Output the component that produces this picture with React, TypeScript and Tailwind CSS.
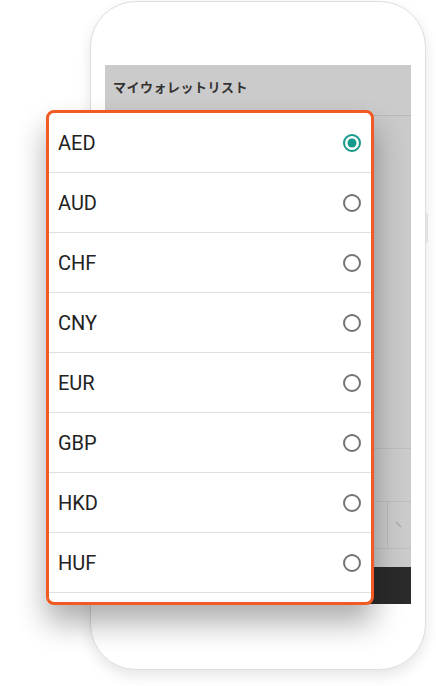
const currencies = ["AED", "AUD", "CHF", "CNY", "EUR", "GBP", "HKD", "HUF"];

function Radio({ checked }: { checked: boolean }) {
  return (
    <svg width="20" height="20" viewBox="0 0 20 20">
      <circle
        cx="10"
        cy="10"
        r="8"
        fill="none"
        stroke={checked ? "#14998a" : "#737373"}
        strokeWidth="2"
      />
      {checked && <circle cx="10" cy="10" r="4.5" fill="#14998a" />}
    </svg>
  );
}

export default function App() {
  return (
    <div className="relative h-[686px] w-[436px] overflow-hidden bg-white font-['Roboto','Noto_Sans_CJK_JP',sans-serif]">
      {/* Phone mockup */}
      <div className="relative ml-[90px] mt-[1px] h-[669px] w-[336px] rounded-[46px] border border-[#dedede] bg-white shadow-[0_6px_14px_rgba(0,0,0,0.10)]">
        {/* side button */}
        <div className="absolute right-[-3px] top-[211px] h-[30px] w-[2px] rounded-r bg-[#e2e2e2]" />

        {/* Screen */}
        <div className="ml-[14px] mt-[63px] flex h-[539px] w-[306px] flex-col bg-[#cbcbcb]">
          <div className="h-[51px] border-b border-[#b9b9b9] pl-[8px] pt-[12px] text-[13px] font-bold tracking-[0.5px] text-[#333] font-['Noto_Sans_CJK_JP',sans-serif]">
            マイウォレットリスト
          </div>
          <div className="h-[333px] border-b border-[#bdbdbd] bg-gradient-to-r from-[#cbcbcb] via-[#c6c6c6] to-[#cacaca]" />
          <div className="h-[53px] border-b border-[#bdbdbd]" />
          <div className="flex h-[47px] border-b border-[#bdbdbd]">
            <div className="flex-1 border-r border-[#bdbdbd]" />
            <div className="flex w-[23px] items-center justify-center">
              <svg width="12" height="10" viewBox="0 0 12 10">
                <path d="M2 2 L7 7" stroke="#a8a8a8" strokeWidth="1.3" fill="none" />
              </svg>
            </div>
          </div>
          <div className="h-[18px]" />
          <div className="h-[37px] bg-gradient-to-r from-[#4a4a4a] via-[#2e2e2e] to-[#2a2a2a]" />
        </div>
      </div>

      {/* Currency picker dialog */}
      <div className="absolute left-[46px] top-[110px] h-[495px] w-[328px] overflow-hidden rounded-[8px] border-[3px] border-[#f15a22] bg-white shadow-[0_18px_30px_rgba(0,0,0,0.32)]">
        {currencies.map((c, i) => (
          <div
            key={c}
            className="flex h-[60px] items-center justify-between border-b border-[#e0e0e0] pl-[9px] pr-[9px]"
          >
            <span className="text-[20px] text-[#222]">{c}</span>
            <Radio checked={i === 0} />
          </div>
        ))}
      </div>
    </div>
  );
}
